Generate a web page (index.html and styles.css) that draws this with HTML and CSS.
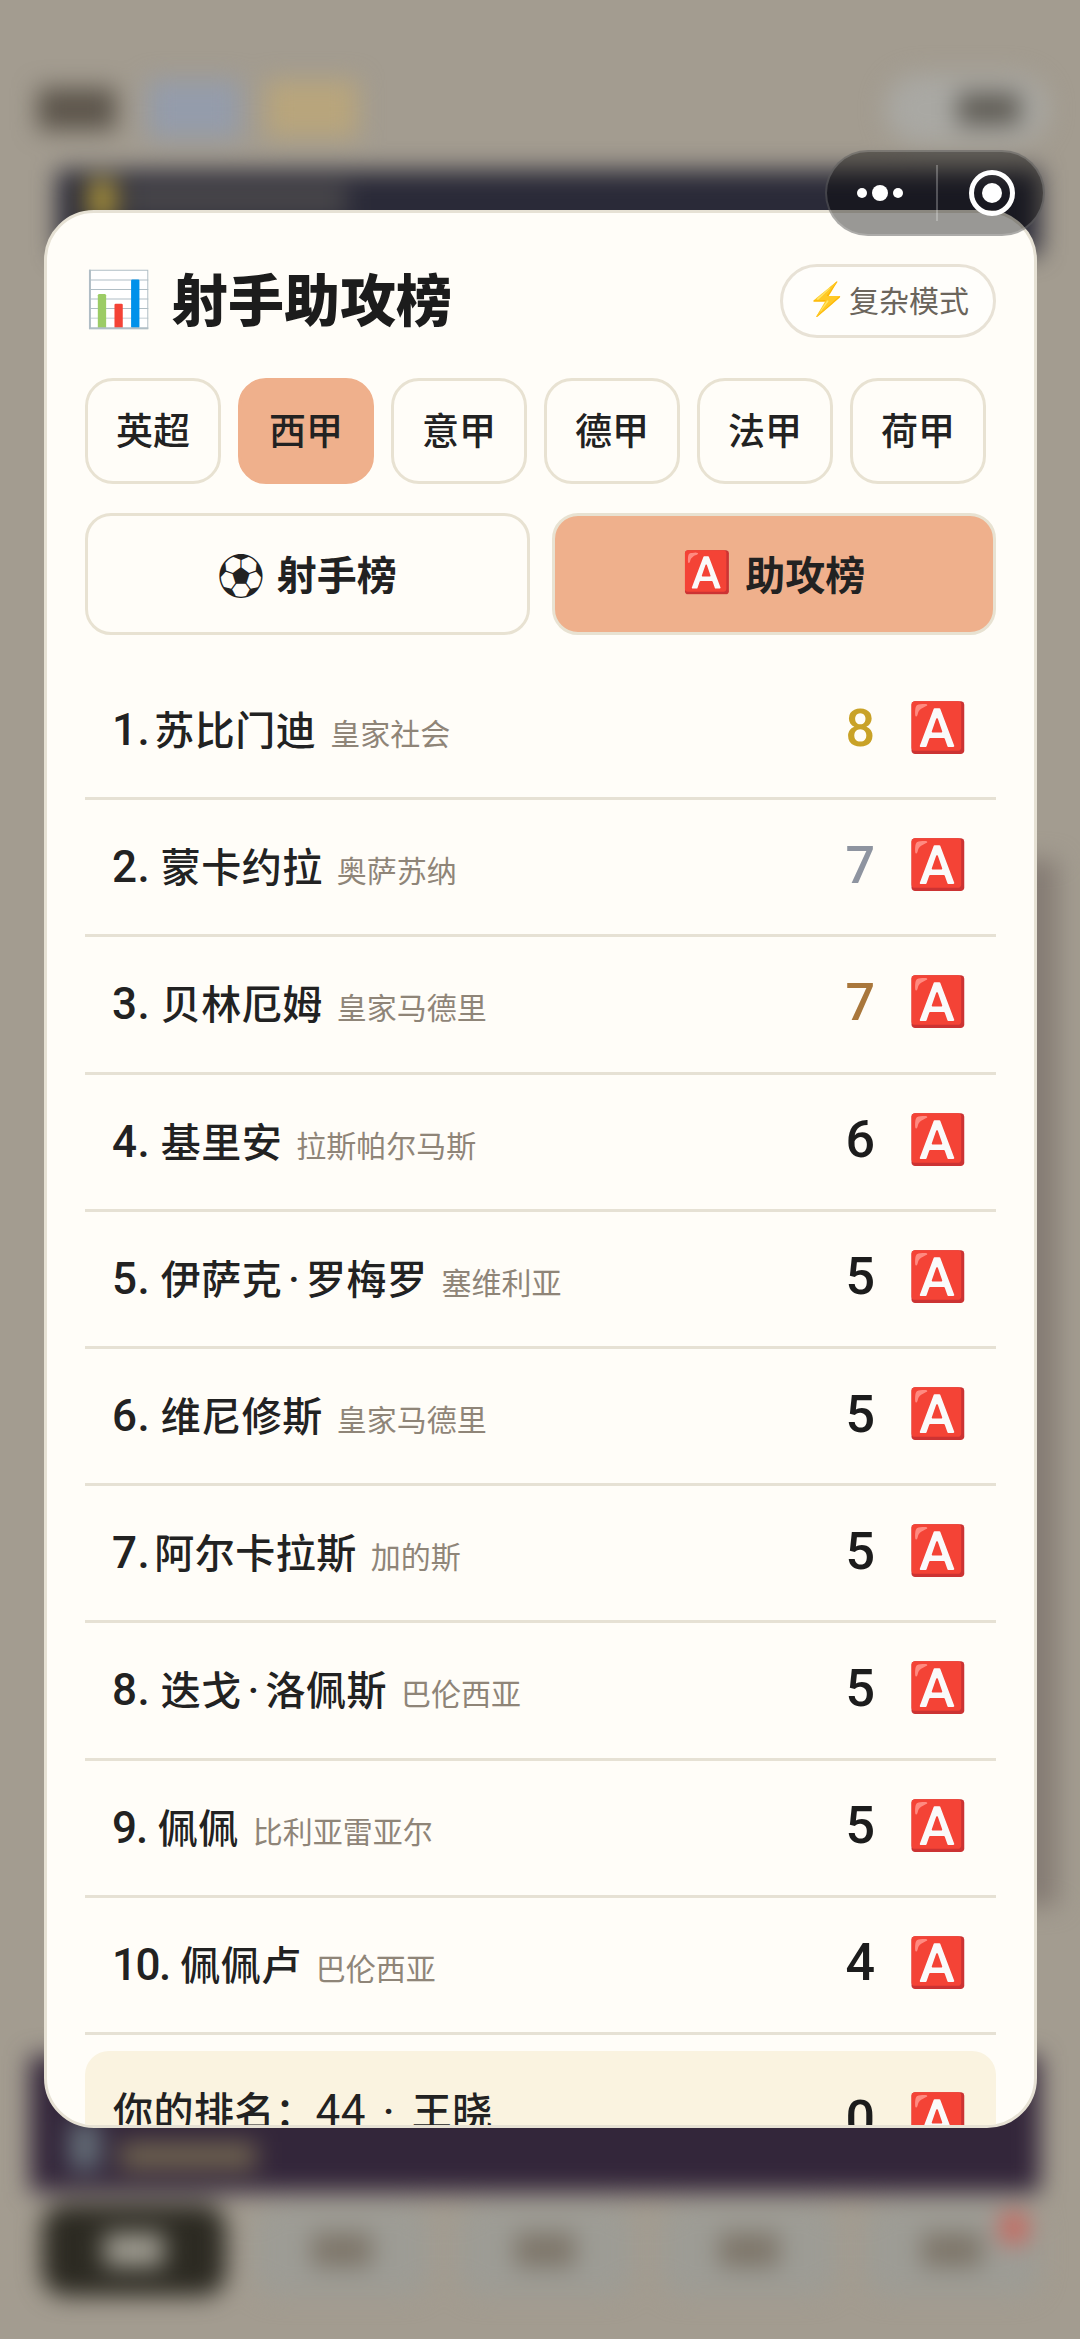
FILE: index.html
```html
<!DOCTYPE html>
<html lang="zh">
<head>
    <meta charset="UTF-8">
    <title>射手助攻榜</title>
    <link rel="stylesheet" href="styles.css">
</head>
<body>
    <!-- pagina de atras, desenfocada -->
    <div class="backdrop">
        <div class="top-bar">
            <div class="top-title"></div>
            <div class="top-chip top-chip-blue"></div>
            <div class="top-chip top-chip-gold"></div>
            <div class="top-pill"><span class="top-pill-label"></span></div>
        </div>
        <div class="notice-band"><span class="notice-star"></span><span class="notice-text"></span></div>
        <div class="side-panel"></div>
        <div class="user-band"><span class="user-icon"></span><span class="user-text"></span></div>
        <div class="bottom-nav">
            <div class="nav-item nav-item-active"><span class="nav-label"></span></div>
            <div class="nav-item"><span class="nav-label"></span></div>
            <div class="nav-item"><span class="nav-label"></span></div>
            <div class="nav-item"><span class="nav-label"></span></div>
            <div class="nav-item"><span class="nav-label"></span><span class="nav-dot"></span></div>
        </div>
    </div>

    <div class="card">
        <div class="card-head">
            <h1 class="card-title"><span class="title-icon">📊</span><span>射手助攻榜</span></h1>
            <div class="mode-switch"><span class="bolt">⚡</span><span>复杂模式</span></div>
        </div>

        <div class="league-tabs">
            <div class="league-tab">英超</div>
            <div class="league-tab league-tab-on">西甲</div>
            <div class="league-tab">意甲</div>
            <div class="league-tab">德甲</div>
            <div class="league-tab">法甲</div>
            <div class="league-tab">荷甲</div>
        </div>

        <div class="board-tabs">
            <div class="board-tab"><span class="board-icon board-icon-ball">⚽</span>射手榜</div>
            <div class="board-tab board-tab-on"><span class="board-icon">🅰️</span>助攻榜</div>
        </div>

        <div class="rank-list">
            <div class="rank-row">
                <div class="rank-who"><span class="rank-name"><span class="rank-no rank-no-thin">1.</span>苏比门迪</span><span class="rank-team">皇家社会</span></div>
                <span class="rank-num num-gold">8</span><span class="rank-badge">🅰️</span>
            </div>
            <div class="rank-row">
                <div class="rank-who"><span class="rank-name"><span class="rank-no">2.</span> 蒙卡约拉</span><span class="rank-team">奥萨苏纳</span></div>
                <span class="rank-num num-silver">7</span><span class="rank-badge">🅰️</span>
            </div>
            <div class="rank-row">
                <div class="rank-who"><span class="rank-name"><span class="rank-no">3.</span> 贝林厄姆</span><span class="rank-team">皇家马德里</span></div>
                <span class="rank-num num-bronze">7</span><span class="rank-badge">🅰️</span>
            </div>
            <div class="rank-row">
                <div class="rank-who"><span class="rank-name"><span class="rank-no">4.</span> 基里安</span><span class="rank-team">拉斯帕尔马斯</span></div>
                <span class="rank-num">6</span><span class="rank-badge">🅰️</span>
            </div>
            <div class="rank-row">
                <div class="rank-who"><span class="rank-name"><span class="rank-no">5.</span> 伊萨克<span class="name-dot">·</span>罗梅罗</span><span class="rank-team">塞维利亚</span></div>
                <span class="rank-num">5</span><span class="rank-badge">🅰️</span>
            </div>
            <div class="rank-row">
                <div class="rank-who"><span class="rank-name"><span class="rank-no">6.</span> 维尼修斯</span><span class="rank-team">皇家马德里</span></div>
                <span class="rank-num">5</span><span class="rank-badge">🅰️</span>
            </div>
            <div class="rank-row">
                <div class="rank-who"><span class="rank-name"><span class="rank-no rank-no-thin">7.</span>阿尔卡拉斯</span><span class="rank-team">加的斯</span></div>
                <span class="rank-num">5</span><span class="rank-badge">🅰️</span>
            </div>
            <div class="rank-row">
                <div class="rank-who"><span class="rank-name"><span class="rank-no">8.</span> 迭戈<span class="name-dot">·</span>洛佩斯</span><span class="rank-team">巴伦西亚</span></div>
                <span class="rank-num">5</span><span class="rank-badge">🅰️</span>
            </div>
            <div class="rank-row">
                <div class="rank-who"><span class="rank-name"><span class="rank-no rank-no-tight">9.</span> 佩佩</span><span class="rank-team">比利亚雷亚尔</span></div>
                <span class="rank-num">5</span><span class="rank-badge">🅰️</span>
            </div>
            <div class="rank-row">
                <div class="rank-who"><span class="rank-name"><span class="rank-no rank-no-ten">10.</span> 佩佩卢</span><span class="rank-team">巴伦西亚</span></div>
                <span class="rank-num">4</span><span class="rank-badge">🅰️</span>
            </div>
        </div>

        <div class="my-rank">
            <div class="rank-who"><span class="rank-name">你的排名：<span class="rank-no rank-no-plain">44</span><span class="my-dot">·</span>王晓</span></div>
            <span class="rank-num">0</span><span class="rank-badge">🅰️</span>
        </div>
    </div>

    <div class="capsule">
        <svg class="capsule-dots" viewBox="0 0 50 20">
            <circle cx="7" cy="10" r="5" fill="#fff"/>
            <circle cx="25" cy="10" r="8" fill="#fff"/>
            <circle cx="43" cy="10" r="5" fill="#fff"/>
        </svg>
        <span class="capsule-line"></span>
        <svg class="capsule-ring" viewBox="0 0 46 46">
            <circle cx="23" cy="23" r="20.500" fill="none" stroke="#fff" stroke-width="5"/>
            <circle cx="23" cy="23" r="10" fill="#fff"/>
        </svg>
    </div>
</body>
</html>
```
FILE: styles.css
```css
* {
    box-sizing: border-box;
}

html, body {
    margin: 0;
    width: 1080px;
    height: 2339px;
    overflow: hidden;
}

body {
    position: relative;
    background-color: #a39c90;
    font-family: Roboto, "Noto Sans CJK SC", sans-serif;
    color: #222;
}

/* Pagina de fondo */
.backdrop {
    position: absolute;
    inset: 0;
    padding-top: 78px;
    filter: blur(12px);
}

.top-bar {
    display: flex;
    align-items: center;
    height: 62px;
    padding: 0 32px 0 38px;
}

.top-title {
    width: 78px;
    height: 42px;
    background-color: #5c554b;
}

.top-chip {
    width: 92px;
    height: 58px;
}

.top-chip-blue {
    margin-left: 32px;
    background-color: #949cab;
}

.top-chip-gold {
    margin-left: 26px;
    background-color: #b8a57c;
}

.top-pill {
    display: flex;
    align-items: center;
    justify-content: flex-end;
    width: 163px;
    height: 70px;
    margin-left: auto;
    padding-right: 28px;
    border-radius: 35px;
    background-color: #a9a8a3;
}

.top-pill-label {
    width: 62px;
    height: 32px;
    background-color: #5f5c55;
}

.notice-band {
    display: flex;
    align-items: center;
    height: 85px;
    margin: 30px 40px 0 57px;
    padding: 0 0 25px 30px;
    background-color: #2a2a38;
}

.notice-star {
    width: 30px;
    height: 40px;
    background-color: #a58f3c;
}

.notice-text {
    width: 220px;
    height: 28px;
    margin-left: 10px;
    background-color: #4c4a4c;
}

.side-panel {
    height: 1046px;
    margin: 605px 22px 0 200px;
    background-color: #857c74;
}

.user-band {
    display: flex;
    align-items: flex-end;
    height: 136px;
    margin: 150px 40px 0 30px;
    padding: 0 0 22px 40px;
    background-color: #33263a;
}

.user-icon {
    width: 30px;
    height: 48px;
    background-color: #66707a;
}

.user-text {
    width: 136px;
    height: 28px;
    margin-left: 20px;
    background-color: #6f6350;
}

.bottom-nav {
    display: flex;
    gap: 28px;
    margin: 12px 40px 0 42px;
}

.nav-item {
    position: relative;
    display: flex;
    align-items: center;
    justify-content: center;
    flex: 1;
    height: 92px;
    border-radius: 24px;
    background-color: #9d9c95;
}

.nav-item-active {
    flex: none;
    width: 184px;
    background-color: #2c2a22;
}

.nav-label {
    width: 60px;
    height: 34px;
    background-color: #7d7569;
}

.nav-item-active .nav-label {
    background-color: #a09d92;
}

.nav-dot {
    position: absolute;
    top: 8px;
    right: 12px;
    width: 28px;
    height: 32px;
    border-radius: 50%;
    background-color: #cf5f55;
}

/* Ventana del ranking */
.card {
    position: absolute;
    top: 210px;
    left: 44px;
    width: 993px;
    height: 1918px;
    padding: 51px 38px 0;
    overflow: hidden;
    border: 3px solid #e6e1d4;
    border-radius: 50px;
    background-color: #fffdf8;
}

.card-head {
    display: flex;
    align-items: center;
    justify-content: space-between;
    height: 74px;
}

.card-title {
    display: flex;
    align-items: center;
    gap: 20px;
    margin: 0 0 10px;
    font-size: 56px;
    font-weight: 900;
    color: #1c1c1c;
}

.title-icon {
    margin-top: 8px;
    font-size: 54px;
    font-weight: 400;
    line-height: 60px;
}

.mode-switch {
    display: flex;
    align-items: center;
    gap: 2px;
    height: 74px;
    padding: 0 24px 4px 24px;
    border: 3px solid #e8e2d6;
    border-radius: 37px;
    background-color: #fffefb;
    font-size: 30px;
    color: #6b655c;
}

.bolt {
    font-size: 32px;
}

.league-tabs {
    display: flex;
    gap: 17px;
    margin-top: 40px;
}

.league-tab {
    display: flex;
    align-items: center;
    justify-content: center;
    width: 136px;
    height: 106px;
    padding-bottom: 5px;
    border: 3px solid #e8e2d2;
    border-radius: 28px;
    font-size: 37px;
    font-weight: 500;
}

.league-tab-on {
    border-color: #efb08c;
    background-color: #efb08c;
}

.board-tabs {
    display: grid;
    grid-template-columns: 1fr 1fr;
    gap: 22px;
    margin-top: 29px;
}

.board-tab {
    display: flex;
    align-items: center;
    justify-content: center;
    gap: 13px;
    height: 122px;
    padding-bottom: 3px;
    border: 3px solid #e8e2d2;
    border-radius: 26px;
    font-size: 40px;
    font-weight: 700;
}

.board-tab-on {
    background-color: #efb08c;
}

.board-icon {
    font-size: 40px;
    font-weight: 400;
}

.board-icon-ball {
    font-size: 46px;
}

.rank-list {
    margin-top: 28px;
}

.rank-row {
    display: flex;
    align-items: center;
    height: 137.2px;
    padding: 0 32px 4px 27px;
    border-bottom: 3px solid #e6e1d4;
}

.rank-who {
    display: flex;
    align-items: baseline;
    gap: 14px;
    flex: 1;
}

.rank-name {
    font-size: 40px;
    font-weight: 500;
    letter-spacing: 0.5px;
}

.rank-no {
    font-size: 44px;
}

.rank-no-thin {
    margin-right: 4px;
}

.rank-no-tight {
    letter-spacing: -1px;
}

.rank-no-ten {
    letter-spacing: -1.500px;
}

.rank-no-plain {
    font-weight: 400;
}

.name-dot {
    margin: 0 6px;
}

.my-dot {
    margin: 0 17px;
}

.rank-team {
    font-size: 30px;
    color: #8f8578;
}

.rank-num {
    margin-right: 33px;
    font-size: 52px;
    font-weight: 500;
    color: #1c1c1c;
}

.num-gold {
    color: #c9a227;
}

.num-silver {
    color: #8e94a0;
}

.num-bronze {
    color: #a9773c;
}

.rank-badge {
    width: 56px;
    font-size: 48px;
    line-height: 56px;
}

.my-rank {
    display: flex;
    align-items: center;
    height: 137px;
    margin-top: 16px;
    padding: 0 32px 0 28px;
    border-radius: 24px;
    background-color: #faf3e0;
}

/* la fila queda cortada por abajo, el texto va algo mas alto */
.my-rank .rank-who {
    margin-bottom: 20px;
}

/* Capsula del sistema */
.capsule {
    position: absolute;
    top: 150px;
    left: 825px;
    display: flex;
    align-items: center;
    width: 220px;
    height: 86px;
    padding-left: 28px;
    border: 2px solid rgba(255, 255, 255, 0.18);
    border-radius: 43px;
    background-color: rgba(0, 0, 0, 0.4);
}

.capsule-dots {
    width: 50px;
    height: 20px;
}

.capsule-line {
    width: 2px;
    height: 56px;
    margin-left: 31px;
    background-color: rgba(255, 255, 255, 0.25);
}

.capsule-ring {
    width: 46px;
    height: 46px;
    margin-left: 31px;
}
```
